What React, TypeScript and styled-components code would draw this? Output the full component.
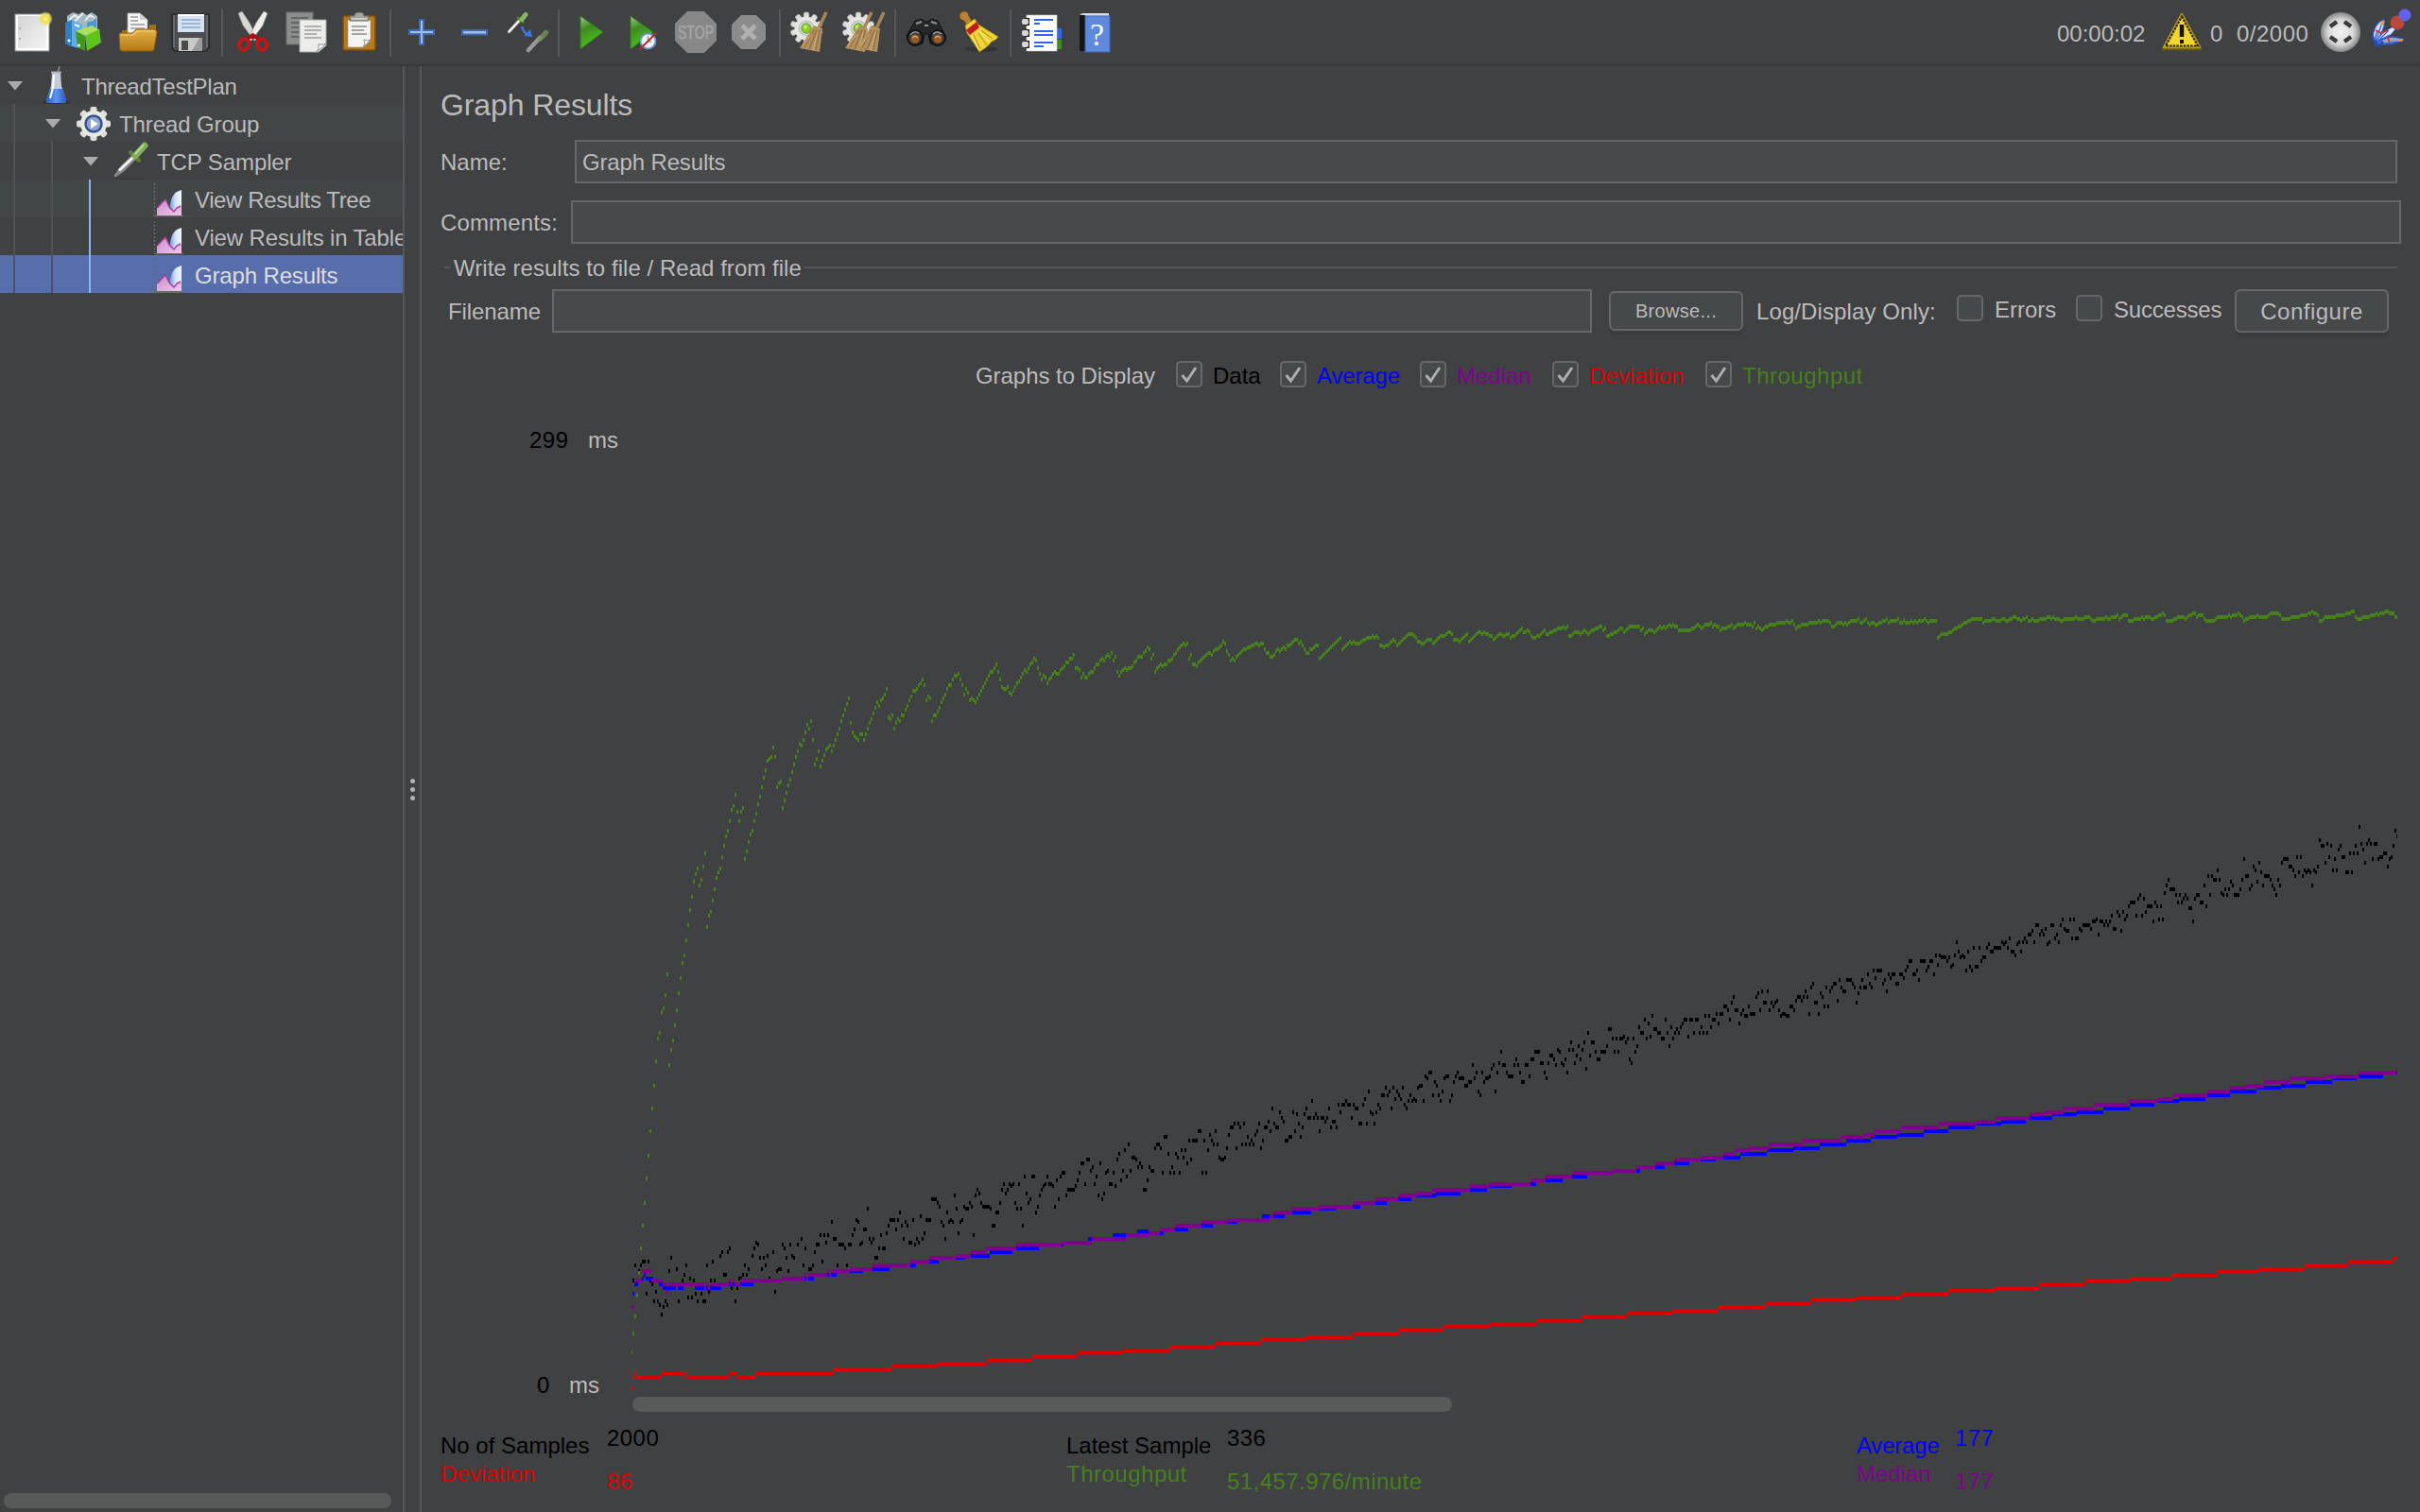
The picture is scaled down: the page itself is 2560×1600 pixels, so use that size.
import React from "react";
import styled, { createGlobalStyle } from "styled-components";

const color = {
  bg: "#404143",
  stripe: "#434647",
  selected: "#586eac",
  text: "#bbbbbb",
  line: "#55585a",
  border: "#656769",
  field: "#48494b",
  button: "#45494a",
  guide: "#505255",
  activeGuide: "#82b7f7",
  black: "#000000",
  blue: "#0000ff",
  purple: "#800090",
  red: "#dc0000",
  green: "#45801b",
  thumb: "#585a59",
};

const GlobalStyle = createGlobalStyle`
  html, body { margin: 0; background: ${color.bg}; }
  body { width: 2560px; height: 1600px; overflow: hidden; }
  * { box-sizing: border-box; }
`;

const Window = styled.div`
  display: flex;
  flex-direction: column;
  width: 2560px;
  height: 1600px;
  background: ${color.bg};
  color: ${color.text};
  font: 24px/28px "Liberation Sans", Arial, sans-serif;
  white-space: nowrap;
`;

const Text = styled.span<{ $color?: string; $width?: number; $drop?: number; $track?: number }>`
  display: block;
  flex: none;
  width: ${(p) => (p.$width ? `${p.$width}px` : "auto")};
  padding-top: ${(p) => p.$drop ?? 0}px;
  color: ${(p) => p.$color ?? "inherit"};
  letter-spacing: ${(p) => p.$track ?? 0}px;
`;

/* ---------- toolbar ---------- */

const Toolbar = styled.div`
  display: flex;
  align-items: center;
  gap: 12px;
  height: 70px;
  flex: none;
  padding: 0 8px 0 12px;
  border-bottom: 2px solid #37383a;
`;

const Separator = styled.div`
  width: 2px;
  height: 50px;
  margin: 2px -2px 0;
  background: ${color.line};
`;

const Status = styled.div`
  display: flex;
  align-items: center;
  margin-left: auto;
`;

const Glyph = styled.svg<{ $left?: number }>`
  display: block;
  flex: none;
  width: 44px;
  height: 44px;
  margin-left: ${(p) => p.$left ?? 0}px;
  overflow: visible;
`;

const Icon = ({ children, left }: { children: React.ReactNode; left?: number }) => (
  <Glyph viewBox="0 0 44 44" $left={left}>
    {children}
  </Glyph>
);

const NewIcon = () => (
  <Icon>
    <defs>
      <radialGradient id="glow">
        <stop offset="0" stopColor="#fffbe0" />
        <stop offset=".35" stopColor="#f3e03a" />
        <stop offset=".7" stopColor="#efe06a" stopOpacity=".75" />
        <stop offset="1" stopColor="#efe06a" stopOpacity="0" />
      </radialGradient>
      <linearGradient id="paper" x1="0" y1="0" x2="1" y2="1">
        <stop offset="0" stopColor="#d4d4d4" />
        <stop offset="1" stopColor="#f4f4f4" />
      </linearGradient>
    </defs>
    <rect x="4" y="3" width="36" height="39" fill="#fff" stroke="#8f918c" strokeWidth="1" />
    <rect x="7" y="5" width="30" height="34" fill="url(#paper)" />
    <circle cx="9" cy="18" r="1" fill="#999" />
    <circle cx="9" cy="29" r="1" fill="#999" />
    <circle cx="36" cy="8" r="8" fill="url(#glow)" />
  </Icon>
);

const TemplatesIcon = () => (
  <Icon>
    <path d="M3 5l6-4 6 2 4-2 5 3 5-3 6 4v22H3z" fill="#a3b6c0" />
    <path d="M5 9l6-5 4 3 5-5M9 12l6-5M22 10l5-6 5 3M25 13l6-4" stroke="#eaf0f2" strokeWidth="1.8" fill="none" />
    <path d="M1 12l7-3v29l-7-4z" fill="#2f7fc4" />
    <path d="M8 9l11 5v26l-11-3z" fill="#62ace6" />
    <path d="M24 12l10-4v12H24z" fill="#4c96d2" />
    <path d="M12 21l17-6 9 5-14 6z" fill="#a8e05c" />
    <path d="M12 21l10 5v16l-8-4z" fill="#3f9a18" />
    <path d="M22 26l15-7 2 14-15 9z" fill="#62c01f" />
    <circle cx="5" cy="31" r="1.500" fill="#fff" />
    <circle cx="15.500" cy="36" r="1.500" fill="#fff" />
    <path d="M11 14l5 2" stroke="#fff" strokeWidth="2" />
  </Icon>
);

const OpenIcon = () => (
  <Icon>
    <defs>
      <linearGradient id="folder" x1="0" y1="0" x2="0" y2="1">
        <stop offset="0" stopColor="#e6b04a" />
        <stop offset="1" stopColor="#b37a14" />
      </linearGradient>
    </defs>
    <path d="M5 20h5v-2h24v-4h7v14H5z" fill="#a36f14" />
    <path d="M11 2h13l8 7v15H11z" fill="#f4f4f4" stroke="#aaa" strokeWidth=".8" />
    <path d="M24 2v7h8z" fill="#cfcfcf" />
    <path d="M14 6h8M14 10h8M14 14h15M14 18h15" stroke="#999" strokeWidth="1.600" />
    <path d="M2 25q0-2 2-2h12l4-4h18q4 0 4 3l-3 18q0 2-3 2H6q-3 0-3-2z" fill="url(#folder)" stroke="#8e5f0c" strokeWidth="1" />
    <path d="M4 25h13l4-4h18" stroke="#f2cf80" strokeWidth="1.200" fill="none" />
  </Icon>
);

const SaveIcon = () => (
  <Icon>
    <path d="M2 3h39v36l-3 3H5l-3-3z" fill="#4b4d50" stroke="#26282a" strokeWidth="1.500" />
    <path d="M4 4v34M39 4v34" stroke="#85878a" strokeWidth="1" />
    <rect x="8" y="3" width="28" height="19" fill="#d5e2f1" />
    <path d="M8 4h28" stroke="#fff" strokeWidth="2" />
    <path d="M12 9h20M12 13h20M12 17h20" stroke="#8aa8cc" strokeWidth="1.600" />
    <rect x="9" y="28" width="25" height="14" fill="#c9c9c9" />
    <rect x="12" y="31" width="7" height="10" fill="#4a4a4a" />
    <path d="M23 42l8-14h3v14z" fill="#9a9a9a" />
  </Icon>
);

const CutIcon = () => (
  <Icon>
    <path d="M6 2l4-2 8 12 9 18-4 1L11 15z" fill="#d7d7d2" stroke="#8b8b86" strokeWidth=".7" />
    <path d="M37 2l-4-2-8 12-9 18 4 1 12-16z" fill="#eeeeea" stroke="#8b8b86" strokeWidth=".7" />
    <path d="M18 27l3.500-3 3.500 3-3.500 3z" fill="#9e1010" />
    <ellipse cx="12" cy="35" rx="5" ry="6" transform="rotate(28 12 35)" fill="none" stroke="#c21718" strokeWidth="4" />
    <ellipse cx="31" cy="35" rx="5" ry="6" transform="rotate(-28 31 35)" fill="none" stroke="#c21718" strokeWidth="4" />
    <path d="M16 29l5.500-4 5.500 4" stroke="#a80f10" strokeWidth="3.500" fill="none" />
  </Icon>
);

const CopyIcon = () => (
  <Icon>
    <rect x="1" y="1" width="28" height="34" fill="#8b8d8c" stroke="#6d6f6e" />
    <path d="M6 7h18M6 12h9M6 17h9M6 22h9M6 27h9" stroke="#646665" strokeWidth="2" />
    <path d="M15 9h28v27l-8 7H15z" fill="#ececeb" stroke="#a5a6a4" />
    <path d="M20 16h18M20 20h18M20 24h13M20 28h18" stroke="#b1b1b0" strokeWidth="1.800" />
    <path d="M33 43q3-3 2-8 5 1 8-1z" fill="#fff" stroke="#8f908f" strokeWidth="1" />
  </Icon>
);

const PasteIcon = () => (
  <Icon>
    <rect x="5" y="5" width="34" height="36" rx="1.500" fill="#b5781c" stroke="#7e4f0a" strokeWidth="1.500" />
    <path d="M10 9h24v22l-7 7H10z" fill="#f3f3f2" stroke="#999" strokeWidth=".6" />
    <path d="M14 16h16M14 20h13M14 24h16" stroke="#8c8d8b" strokeWidth="1.600" />
    <path d="M26 38q3-3 1-8 4 2 7 0z" fill="#fff" stroke="#777" strokeWidth=".8" />
    <path d="M12 5h5q0-4 5-4t5 4h5v5H12z" fill="#a4a69c" stroke="#6b6c66" strokeWidth="1" />
    <path d="M14 8h16" stroke="#d8d9d2" strokeWidth="1.500" />
  </Icon>
);

const PlusIcon = () => (
  <Icon>
    <path d="M20 9h4v11h11v4H24v11h-4V24H9v-4h11z" fill="#9fc0ea" stroke="#4168b0" strokeWidth="2" />
  </Icon>
);

const MinusIcon = () => (
  <Icon>
    <rect x="9" y="20" width="26" height="4.500" fill="#9fc0ea" stroke="#4168b0" strokeWidth="2" />
  </Icon>
);

const ToggleIcon = () => (
  <Icon>
    <path d="M2.500 21.500L14 9" stroke="#777" strokeWidth="4" strokeLinecap="round" />
    <path d="M2.500 21.500L14 9" stroke="#fff" strokeWidth="2.200" strokeLinecap="round" />
    <path d="M12 7l5 4" stroke="#557f38" strokeWidth="3" strokeLinecap="round" />
    <path d="M16 8.500L20 3.500" stroke="#86b862" strokeWidth="5" strokeLinecap="round" />
    <path d="M16 16q2 8 9 9.500" stroke="#3f78dd" strokeWidth="2.400" fill="none" />
    <path d="M27 27l-9-1 7-7z" fill="#3f78dd" />
    <path d="M23 41l12-13" stroke="#b4b6b2" strokeWidth="4.500" strokeLinecap="round" opacity=".75" />
    <path d="M35.500 29l6-6.500" stroke="#76945a" strokeWidth="5.500" strokeLinecap="round" opacity=".8" />
  </Icon>
);

const PlayShape = ({ dx = 0 }: { dx?: number }) => (
  <>
    <defs>
      <linearGradient id="play" x1="0" y1="0" x2=".3" y2="1">
        <stop offset="0" stopColor="#a5cf94" />
        <stop offset=".4" stopColor="#3f8a22" />
        <stop offset="1" stopColor="#49c41c" />
      </linearGradient>
    </defs>
    <path d={`M${12 + dx} 5v35l24-18z`} fill="url(#play)" stroke="#2f7a14" strokeWidth="1" />
  </>
);

const PlayIcon = () => (
  <Icon>
    <PlayShape />
  </Icon>
);

const PlayNoPauseIcon = () => (
  <Icon>
    <PlayShape dx={-3} />
    <circle cx="27.500" cy="31.500" r="8" fill="#f2f4f8" stroke="#6c93c8" strokeWidth="2" />
    <path d="M27.500 26v6h4" stroke="#7a8493" strokeWidth="1.200" fill="none" />
    <path d="M19 40l17-17" stroke="#c22a2a" strokeWidth="2.200" />
  </Icon>
);

const StopWord = styled.text`
  font: 21px "Liberation Sans", Arial, sans-serif;
  fill: #a6a6a6;
  stroke: #a6a6a6;
  stroke-width: 0.6px;
`;

const StopIcon = () => (
  <Icon>
    <path d="M13 0h18l13 13v18L31 44H13L0 31V13z" fill="#878787" />
    <StopWord x="3" y="29" textLength="38" lengthAdjust="spacingAndGlyphs">STOP</StopWord>
  </Icon>
);

const ShutdownIcon = () => (
  <Icon>
    <path d="M14 4h16l10 10v16L30 40H14L4 30V14z" fill="#8b8b8b" />
    <path d="M15 15l14 14M29 15L15 29" stroke="#b0b0b0" strokeWidth="5" />
  </Icon>
);

const GearShape = ({ cx = 17 }: { cx?: number }) => (
  <>
    <g transform={`translate(${cx} 18)`} fill="#dfdfdd" stroke="#a9a9a7" strokeWidth=".8">
      {[0, 36, 72, 108, 144, 180, 216, 252, 288, 324].map((angle) => (
        <rect key={angle} x="-2.800" y="-17" width="5.600" height="8" rx="2" transform={`rotate(${angle})`} />
      ))}
    </g>
    <circle cx={cx} cy="18" r="12.500" fill="#e6e6e4" />
    <circle cx={cx} cy="18" r="7.500" fill="none" stroke="#c4c6c2" strokeWidth="2" />
    <circle cx={cx} cy="18" r="5.200" fill="#8ecb2a" stroke="#67992a" />
    <circle cx={cx - 1} cy="16.500" r="2" fill="#c5ea83" />
  </>
);

const Broom = ({ dx = 0 }: { dx?: number }) => (
  <g transform={`translate(${dx} 0)`}>
    <path d="M38 1l-8 17" stroke="#a58457" strokeWidth="3.500" />
    <path d="M25 15l9 3-3 25-21-4z" fill="#b2905f" />
    <path d="M25 20L15 38M28 20l-8 20M31 20l-4 21" stroke="#8a6b42" strokeWidth="1.200" />
    <path d="M23 24L13 37M29 22l-5 19" stroke="#d2b07c" strokeWidth="1" />
  </g>
);

const ClearIcon = () => (
  <Icon>
    <GearShape />
    <Broom />
  </Icon>
);

const ClearAllIcon = () => (
  <Icon>
    <GearShape cx={16} />
    <Broom dx={-8} />
    <Broom dx={5} />
  </Icon>
);

const SearchIcon = () => (
  <Icon>
    <path d="M10 10l7-2 3 3h4l3-3 7 2 8 16-5 8H26l-2-10h-4l-2 10H7l-6-8z" fill="#26282a" stroke="#0f1011" />
    <path d="M11 13l6-2M33 13l-6-2M20 15h4" stroke="#8f9193" strokeWidth="2" />
    <circle cx="10" cy="28" r="8" fill="#3a3c3e" stroke="#101112" strokeWidth="2" />
    <circle cx="34" cy="28" r="8" fill="#3a3c3e" stroke="#101112" strokeWidth="2" />
    <circle cx="10" cy="29" r="4.500" fill="#9a5b22" />
    <circle cx="34" cy="29" r="4.500" fill="#9a5b22" />
    <path d="M7 28q3-3 6 0M31 28q3-3 6 0" stroke="#e0a566" strokeWidth="1.500" fill="none" />
    <path d="M5 25q4-5 9-2M29 24q4-4 9 0" stroke="#9b9da0" strokeWidth="1.200" fill="none" />
  </Icon>
);

const BroomIcon = () => (
  <Icon>
    <ellipse cx="24" cy="40" rx="17" ry="3" fill="#333436" />
    <path d="M1 4q1-4 5-4t5 5l3 6-5 4-3-5Q1 9 1 4z" fill="#b98236" stroke="#7a4f14" />
    <path d="M7 15l10-7 4 6 21 13q-3 4-7 5-4 6-13 11Q16 33 9 23z" fill="#efd43a" stroke="#a98a10" />
    <path d="M16 25l7 15M21 23l9 13M24 20l12 9" stroke="#bd9c17" strokeWidth="1.200" />
    <path d="M14 26l7 14M22 21l11 12" stroke="#fff3a0" strokeWidth="1" />
    <path d="M8 20l11-9 3 6-10 8z" fill="#c21b1b" />
  </Icon>
);

const FunctionIcon = () => (
  <Icon>
    <rect x="36" y="18" width="7" height="11" fill="#2d6be0" />
    <rect x="36" y="30" width="7" height="10" fill="#3f8f1c" />
    <rect x="6" y="4" width="32" height="38" fill="#fdfdfd" stroke="#ccc" strokeWidth=".6" />
    <path d="M14 9h20M14 21h20M14 33h20" stroke="#3264e6" strokeWidth="2" />
    <path d="M14 13h6M14 25h20M14 37h10" stroke="#3264e6" strokeWidth="2" />
    {[11, 23, 35].map((y) => (
      <g key={y}>
        <rect x="4" y={y - 4} width="5" height="8" fill="#1d1d1d" />
        <rect x="1" y={y - 3} width="7" height="6" rx="2" fill="#d6d6d6" />
      </g>
    ))}
  </Icon>
);

const HelpMark = styled.text`
  font: 34px "Liberation Serif", "Times New Roman", serif;
  fill: #f2f6ff;
`;

const HelpIcon = () => (
  <Icon>
    <path d="M6 4l3-2h28v3H8z" fill="#dcdcdc" />
    <rect x="6" y="4" width="6" height="38" fill="#141517" />
    <rect x="12" y="5" width="26" height="38" fill="#5f8adb" stroke="#3c68bb" strokeWidth="1" />
    <HelpMark x="17" y="36">?</HelpMark>
  </Icon>
);

const WarningIcon = () => (
  <Icon>
    <path d="M22 3L42 40H2z" fill="#6b5a17" stroke="#6b5a17" strokeWidth="2.500" strokeLinejoin="round" />
    <path d="M22 3L41 38H3z" fill="#f1d531" stroke="#b39a20" strokeWidth="2.500" strokeLinejoin="round" />
    <path d="M22 5.500L39 36.500H5z" fill="#f1d531" stroke="#2b2710" strokeWidth="2.200" strokeDasharray="2.500 1.200" />
    <path d="M22 14v13" stroke="#17150a" strokeWidth="4.500" />
    <rect x="20" y="30" width="4" height="4" fill="#17150a" />
  </Icon>
);

const RemoteIcon = () => (
  <Icon>
    <defs>
      <radialGradient id="ball">
        <stop offset="0" stopColor="#f4f4f4" />
        <stop offset=".65" stopColor="#d6d6d6" />
        <stop offset="1" stopColor="#858585" />
      </radialGradient>
    </defs>
    <circle cx="22" cy="22" r="21" fill="url(#ball)" />
    <path d="M11 16l7-5M33 16l-7-5M11 27l7 5M33 27l-7 5" stroke="#3a3a3a" strokeWidth="4.500" />
  </Icon>
);

const FeatherIcon = () => (
  <Icon left={10}>
    <path d="M4 33C-1 24 6 10 14 9c2 6-4 17-9 24z" fill="#d3dff7" stroke="#2c55c8" strokeWidth="1.400" />
    <path d="M5 34Q10 22 24 16l2 3q-7 10-20 15z" fill="#dfe8f7" stroke="#2c55c8" strokeWidth="1" />
    <path d="M5 35q14-13 30-5-11 6-30 5z" fill="#9aa3bd" stroke="#2c55c8" strokeWidth="1.400" />
    <path d="M4 34L12 12M5 34l14-14M5 35l24-3M3 32q2-6 4-12M8 31l12-6" stroke="#2d5be0" strokeWidth="1.100" fill="none" />
    <path d="M1 26l6 11 6-5" stroke="#2349b8" strokeWidth="2.500" fill="none" />
    <path d="M5 20l6 3 7-3M17 26l3 7" stroke="#c8342e" strokeWidth="1.800" fill="none" />
    <path d="M11 14l3-4M29 31l5-1" stroke="#e89a2c" strokeWidth="2.800" />
    <circle cx="28" cy="12" r="7.500" fill="#b8493c" />
    <circle cx="36" cy="4" r="6.500" fill="#6462ee" />
  </Icon>
);

const toolbarGroups: React.FC[][] = [
  [NewIcon, TemplatesIcon, OpenIcon, SaveIcon],
  [CutIcon, CopyIcon, PasteIcon],
  [PlusIcon, MinusIcon, ToggleIcon],
  [PlayIcon, PlayNoPauseIcon, StopIcon, ShutdownIcon],
  [ClearIcon, ClearAllIcon],
  [SearchIcon, BroomIcon],
  [FunctionIcon, HelpIcon],
];

/* ---------- tree ---------- */

const Body = styled.div`
  display: flex;
  flex: 1;
  min-height: 0;
`;

const TreePane = styled.div`
  display: flex;
  flex-direction: column;
  width: 426px;
  flex: none;
  overflow: hidden;
`;

const TreeRow = styled.div<{ $striped?: boolean; $selected?: boolean }>`
  display: flex;
  align-items: center;
  height: 40px;
  flex: none;
  overflow: hidden;
  background: ${(p) => (p.$selected ? color.selected : p.$striped ? color.stripe : "transparent")};
  color: ${(p) => (p.$selected ? "#dddddd" : color.text)};
`;

const Indent = styled.div<{ $active: boolean }>`
  flex: none;
  width: 26px;
  height: 40px;
  margin-left: 14px;
  border-left: 2px solid ${(p) => (p.$active ? color.activeGuide : color.guide)};
`;

const Expander = styled.div<{ $open: boolean }>`
  flex: none;
  width: 38px;
  padding-left: 7.5px;
  &::before {
    content: "";
    display: ${(p) => (p.$open ? "block" : "none")};
    width: 17px;
    height: 10px;
    margin-top: 1px;
    background: #a9abad;
    clip-path: polygon(0 0, 100% 0, 50% 100%);
  }
`;

const NodeLabel = styled(Text)`
  margin-left: 4px;
`;

const TreeThumb = styled.div`
  width: 410px;
  height: 16px;
  margin: auto 0 4px 4px;
  border-radius: 8px;
  background: ${color.thumb};
`;

const FlaskIcon = () => (
  <Icon>
    <defs>
      <linearGradient id="liquid" x1="0" y1="0" x2="1" y2="0">
        <stop offset="0" stopColor="#2559c4" />
        <stop offset=".5" stopColor="#5d94f0" />
        <stop offset="1" stopColor="#2559c4" />
      </linearGradient>
    </defs>
    <ellipse cx="21" cy="40" rx="14" ry="2.500" fill="#2f3032" />
    <path d="M23 9l2-7" stroke="#8a8a8a" strokeWidth="1.500" />
    <path d="M17 9h9l1 14 5 15q0 3-3 3H14q-4 0-3-3l5-15z" fill="#c3cbdc" />
    <path d="M15 26h13l4 12q0 3-3 3H14q-4 0-3-3z" fill="url(#liquid)" />
    <path d="M19 11l-1 14-3 11" stroke="#fff" strokeWidth="2" fill="none" />
    <path d="M16 8.500h11" stroke="#a7adba" strokeWidth="2" />
  </Icon>
);

const ThreadGroupIcon = () => (
  <Icon>
    <g transform="translate(21 23)" fill="#dededa">
      {[0, 45, 90, 135, 180, 225, 270, 315].map((angle) => (
        <rect key={angle} x="-3.500" y="-18" width="7" height="8" rx="2" transform={`rotate(${angle})`} />
      ))}
    </g>
    <circle cx="21" cy="23" r="14" fill="#e8e8e5" />
    <circle cx="21" cy="23" r="8.500" fill="#8ea3cf" stroke="#35528f" strokeWidth="2.500" />
    <path d="M18 18v10l8-5z" fill="#fff" />
  </Icon>
);

const SamplerIcon = () => (
  <Icon>
    <path d="M4 42h30" stroke="#343537" strokeWidth="2.500" />
    <path d="M2 38l6-9 15-15 5 5-15 15-9 6z" fill="#858785" stroke="#3a3b3b" strokeWidth=".8" />
    <path d="M8 32.500l17-16" stroke="#f5f5f5" strokeWidth="2.800" />
    <path d="M20 13l9 9" stroke="#587f3d" strokeWidth="4" strokeLinecap="round" />
    <path d="M25 17l10-11" stroke="#7fae5c" strokeWidth="7" strokeLinecap="round" />
    <path d="M25.500 14.500l8-9" stroke="#b5d69a" strokeWidth="2" strokeLinecap="round" />
  </Icon>
);

const ListenerIcon = () => (
  <Icon>
    <defs>
      <linearGradient id="sky" x1="0" y1="0" x2="1" y2="0">
        <stop offset="0" stopColor="#5f8fe0" />
        <stop offset=".5" stopColor="#d3e2fb" />
        <stop offset="1" stopColor="#f4f8ff" />
      </linearGradient>
      <linearGradient id="pink" x1="0" y1="0" x2="1" y2="1">
        <stop offset="0" stopColor="#c78fd0" />
        <stop offset="1" stopColor="#f3c6ec" />
      </linearGradient>
    </defs>
    <path d="M5.500 6v33" stroke="#66686a" strokeWidth="1.500" strokeDasharray="2 2" />
    <path d="M5 40.500h31" stroke="#66686a" strokeWidth="1.500" />
    <path d="M21 37q1-18 8-22l5-2v27H21z" fill="url(#sky)" />
    <path d="M8 40v-8l4-4 5-5 4 8 5 5 3-4 5-2v10z" fill="url(#pink)" />
    <path d="M8.500 32l3.500-4 5-5 4 8 5 5 3-4 4-2" stroke="#a53f8c" strokeWidth="1.400" fill="none" />
  </Icon>
);

const treeNodes = [
  { label: "ThreadTestPlan", depth: 0, open: true, icon: FlaskIcon, track: -0.25 },
  { label: "Thread Group", depth: 1, open: true, icon: ThreadGroupIcon, track: -0.1 },
  { label: "TCP Sampler", depth: 2, open: true, icon: SamplerIcon, track: -0.1 },
  { label: "View Results Tree", depth: 3, icon: ListenerIcon, track: -0.4 },
  { label: "View Results in Table", depth: 3, icon: ListenerIcon, track: -0.15 },
  { label: "Graph Results", depth: 3, icon: ListenerIcon, selected: true, track: -0.15 },
];

const Splitter = styled.div`
  display: flex;
  flex-direction: column;
  align-items: center;
  justify-content: center;
  gap: 4px;
  width: 20px;
  flex: none;
  border: solid ${color.line};
  border-width: 0 2px;
`;

const Grip = styled.div`
  width: 5px;
  height: 5px;
  border-radius: 50%;
  background: #b0b2b4;
`;

/* ---------- form ---------- */

const Panel = styled.div`
  display: flex;
  flex-direction: column;
  flex: 1;
  min-width: 0;
  padding: 21px 20px 0;
`;

const Title = styled.div`
  height: 40px;
  font-size: 32px;
  line-height: 40px;
  letter-spacing: -0.1px;
`;

const FormRow = styled.div<{ $top: number; $left?: number; $right?: number }>`
  display: flex;
  align-items: center;
  flex: none;
  height: 46px;
  margin: ${(p) => p.$top}px ${(p) => p.$right ?? 0}px 0 ${(p) => p.$left ?? 0}px;
`;

const Field = styled.div<{ $width?: number }>`
  flex: ${(p) => (p.$width ? "none" : "1")};
  width: ${(p) => (p.$width ? `${p.$width}px` : "auto")};
  height: 46px;
  padding: 8px 0 0 6px;
  border: 2px solid ${color.border};
  background: ${color.field};
  letter-spacing: -0.15px;
`;

const GroupTitle = styled.div`
  display: flex;
  align-items: center;
  height: 28px;
  flex: none;
  margin: 12px 4px 0 4px;
`;

const Rule = styled.div<{ $width?: number }>`
  flex: ${(p) => (p.$width ? "none" : "1")};
  width: ${(p) => (p.$width ? `${p.$width}px` : "auto")};
  height: 2px;
  margin: 0 4px 2px 4px;
  background: ${color.line};
  &:first-child { margin-left: 0; }
  &:last-child { margin: 0 0 2px 3px; }
`;

const Button = styled.div<{ $width: number; $small?: boolean }>`
  flex: none;
  width: ${(p) => p.$width}px;
  height: ${(p) => (p.$small ? 42 : 46)}px;
  padding-top: ${(p) => (p.$small ? 5 : 8)}px;
  border: 2px solid ${color.border};
  border-radius: 6px;
  background: ${color.button};
  box-shadow: 0 4px 0 #3a3b3d;
  font-size: ${(p) => (p.$small ? 20 : 24)}px;
  letter-spacing: ${(p) => (p.$small ? 0.3 : 0.5)}px;
  text-align: center;
`;

const CheckItem = styled.div<{ $width: number; $lift?: boolean }>`
  display: flex;
  align-items: center;
  gap: ${(p) => (p.$lift ? 12 : 11)}px;
  flex: none;
  width: ${(p) => p.$width}px;
  height: 28px;
  margin-bottom: ${(p) => (p.$lift ? 6 : 0)}px;
`;

const Box = styled.svg`
  flex: none;
  width: 28px;
  height: 28px;
`;

type CheckboxProps = { label: string; width: number; checked?: boolean; tint?: string; lift?: boolean; track?: number };

const Checkbox = ({ label, width, checked, tint, lift, track }: CheckboxProps) => (
  <CheckItem $width={width} $lift={lift}>
    <Box viewBox="0 0 28 28">
      <rect x="1" y="1" width="26" height="26" rx="3.500" fill={color.button} stroke={color.border} strokeWidth="2" />
      {checked && <path d="M6.500 15l5 6L21 7" fill="none" stroke="#abadaf" strokeWidth="3" />}
    </Box>
    <Text $drop={4} $color={tint} $track={track}>{label}</Text>
  </CheckItem>
);

const Space = styled.div<{ $size: number }>`
  flex: none;
  width: ${(p) => p.$size}px;
`;

const GraphChoices = styled.div`
  display: flex;
  align-items: center;
  flex: none;
  height: 28px;
  margin: 30px 0 0 566px;
`;

/* ---------- chart ---------- */

const ChartArea = styled.div`
  display: flex;
  flex: none;
  height: 1074px;
  margin-top: 10px;
`;

const Axis = styled.div`
  display: flex;
  flex-direction: column;
  justify-content: space-between;
  width: 202px;
  padding: 32px 0 14px;
`;

const AxisMark = styled.div<{ $left: number }>`
  display: flex;
  padding-left: ${(p) => p.$left}px;
`;

const PlotColumn = styled.div`
  display: flex;
  flex-direction: column;
`;

const Plot = styled.svg`
  display: block;
  width: 1868px;
  height: 1058px;
  overflow: hidden;
`;

const PlotThumb = styled.div`
  width: 867px;
  height: 16px;
  margin-left: 1px;
  border-radius: 8px;
  background: ${color.thumb};
`;

/* Each strip of the recording keeps its own origin and units per pixel. */
type Strip = {
  x: number;
  scale: number;
  end: number;
  throughput: string;
  data: string;
  median: string;
  average: string;
};

const strips: Strip[] = [
  {
    x: 640,
    scale: 1568 / 860,
    end: 1468,
    throughput:
      "84,1442 90,1405 96,1373 102,1332 108,1289 114,1241 120,1198 126,1154 132,1106 138,1063 144,1015 150,971 156,928 162,880 168,837 174,826 180,785 186,778 192,753 198,713 204,888 210,858 216,840 222,811 228,782 234,749 240,720 246,691 252,676 258,647 264,618 270,589 276,563 282,534 288,520 294,509 300,541 306,530 312,505 318,479 324,621 330,599 336,592 342,570 348,548 354,527 360,516 366,509 372,487 378,465 384,447 390,435 396,417 402,395 408,388 414,366 420,399 426,417 432,399 438,392 444,490 450,476 456,457 462,443 468,435 474,417 480,403 486,384 492,370 498,352 504,333 510,319 516,300 522,297 528,293 534,275 540,293 546,352 552,344 558,341 564,392 570,377 576,362 582,348 588,337 594,322 600,308 606,293 612,282 618,268 624,271 630,260 636,246 642,231 648,238 654,224 660,260 666,308 672,297 678,282 684,311 690,300 696,290 702,279 708,275 714,271 720,282 726,271 744,238 750,224 774,180 780,228 786,246 792,253 804,260 810,250 816,250 822,260 840,228 846,220 864,187 870,195 876,184 882,180 888,173 894,162 900,217 906,220 912,213 918,238 924,228 930,220 936,224 942,213 948,213 978,166 984,166 1002,151 1008,144 1014,155 1020,184 1026,177 1032,180 1038,224 1044,213 1050,213 1056,206 1092,155 1098,155 1110,136 1116,136 1122,133 1134,155 1140,173 1146,162 1152,169 1158,184 1164,180 1176,187 1224,129 1230,129 1242,115 1254,144 1260,158 1266,162 1272,162 1278,158 1284,169 1290,173 1332,126 1338,129 1362,104 1368,107 1374,122 1386,144 1392,136 1398,140 1404,151 1428,129 1434,133 1440,133 1446,126 1470,108",
    data:
      "90,1303 96,1274 108,1285 114,1274 120,1267,2 138,1267 132,1329 144,1303 150,1311 156,1343 162,1325 168,1343 174,1350 180,1369 186,1354 192,1343 198,1350 204,1285 210,1260 228,1281 234,1343 246,1303 252,1292 258,1274 264,1336 270,1300 276,1336 282,1303 288,1329 294,1343 306,1329 312,1343,2 324,1274 330,1325 336,1303 342,1267 348,1303 366,1256 372,1249 378,1292,2 390,1249 396,1241 402,1318 414,1343 420,1318 426,1300,2 438,1292 444,1274 450,1292 456,1281 468,1256 474,1241 480,1230 486,1234 492,1260 498,1281 504,1260 510,1274 516,1256 522,1300 534,1249 540,1325 546,1285 552,1281,2 564,1234 570,1241 576,1260 582,1285 588,1234 594,1256 600,1260 612,1234 624,1223 630,1274 636,1241 648,1281,2 660,1274 666,1249 672,1234,2 684,1216 690,1267 696,1216 702,1230 708,1216 720,1190 726,1223,2 738,1274 744,1234,3 762,1241 768,1274 774,1234,2 786,1216 792,1205 798,1187 804,1190 810,1234 816,1230 822,1205,2 834,1164 840,1223 846,1230 852,1223 858,1260,2 870,1241 876,1216 882,1241,2 894,1212 900,1198 906,1187,3 924,1205 930,1187 936,1172 942,1198 948,1223 954,1190 960,1198 966,1230,2 978,1187 984,1234 990,1223 996,1230 1002,1179 1008,1223 1014,1212 1020,1187,3 1038,1146,3 1056,1153 1062,1161 1068,1190 1074,1198 1080,1223 1086,1172 1092,1190 1098,1187 1104,1190 1110,1139 1116,1164 1122,1212 1128,1190 1134,1187 1140,1161 1146,1164,2 1158,1153 1164,1161 1170,1216 1176,1139 1182,1128 1188,1135 1194,1153 1200,1161,4 1224,1164 1230,1198,2 1242,1172,2 1254,1153 1260,1128 1266,1117 1272,1135 1278,1128 1284,1117 1290,1120 1296,1117 1302,1153 1308,1164 1314,1117 1320,1164 1326,1198 1332,1102 1338,1135 1344,1153 1350,1146 1356,1102,2 1368,1172 1374,1161 1380,1139 1386,1128 1392,1120 1398,1117 1404,1102 1410,1117,2 1422,1120 1428,1161 1434,1110 1440,1146 1446,1102 1452,1095,2 1464,1139",
    median:
      "84-93,1354 93-117,1303 117-147,1285 147-183,1303 183-195,1311 195-201,1325 201-315,1311 315-321,1318 321-327,1311 327-333,1318 333-393,1311 393-399,1303 399-405,1311 405-411,1303 411-429,1311 429-561,1303 561-633,1300 633-639,1292 639-645,1300 645-705,1292 705-711,1285 711-717,1292 717-777,1285 777-849,1281 849-969,1274 969-1029,1267 1029-1113,1260 1113-1161,1256 1161-1209,1249 1209-1305,1241 1305-1449,1234 1449-1470,1230",
    average:
      "87-93,1329 93-105,1311 117-123,1300 123-129,1292 129-153,1300 171-183,1311 183-225,1318 231-249,1318 285-315,1318 321-327,1318 333-369,1318 393-399,1311 405-411,1311 429-471,1311 633-639,1300 645-663,1300 705-711,1292 717-735,1292 777-819,1285 849-903,1281 969-987,1274 1029-1059,1267 1113-1143,1260 1161-1221,1256 1221-1293,1249 1305-1377,1241 1449-1455,1234",
  },
  {
    x: 1130,
    scale: 1568 / 720,
    end: 1408,
    throughput:
      "0,132 6,124 12,124 18,115 24,146 30,146 36,150 42,167 48,159 54,167 60,167 66,159 78,154 90,137 96,137 108,124 114,128 120,119 126,115 132,119 138,110 144,128 150,119 156,154 162,163 174,150 180,146 186,150 204,141 222,119 234,119 252,98 258,102 264,124 270,115 276,154 282,146 294,137 300,141 312,137 318,128 324,128 354,98 366,89 372,93 378,89 384,124 390,115 396,137 402,137 408,141 414,132 438,115 450,110 456,115 462,106 480,98 492,85 498,89 504,106 510,115 516,128 522,124 528,128 534,119 552,106 576,98 600,89 606,93 612,89 618,89 624,102 630,110 636,110 642,119 648,119 666,102 672,106 684,98 690,102 696,93 702,93 720,80 726,80 732,89 738,85 744,93 750,102 756,110 762,110 768,102 774,102 786,93 792,93 798,124 864,76 870,102 888,89 894,85 900,89 906,85 912,89 924,89 948,76 960,76 966,72 972,76 978,72 984,76 990,93 996,93 1002,98 1020,89 1032,80 1038,85 1044,93 1062,80 1080,67 1086,67 1098,72 1104,76 1110,85 1116,85 1122,89 1128,89 1140,80 1152,80 1158,89 1182,72 1194,72 1206,63 1218,67 1224,80 1236,80 1242,85 1266,67 1272,85 1296,67 1308,63 1314,67 1320,63 1326,67 1344,72 1350,80 1362,72 1374,67 1380,72 1398,67 1404,76",
    data:
      "0,1348,4 24,1339 30,1326 36,1308 42,1287,2 54,1335 60,1278,2 72,1304 78,1295 84,1335 90,1317 96,1361 102,1287 108,1369 114,1356 120,1308 126,1304 132,1335,2 144,1308 150,1339 156,1278 162,1265 168,1326 174,1304 180,1256 186,1317 192,1243 198,1304 204,1274,2 216,1278 222,1295 228,1287 234,1295 240,1348,2 252,1326 258,1295 264,1304,2 276,1252 282,1243,2 294,1252 300,1308 306,1226,2 318,1265 324,1308 330,1295 336,1308 342,1265 348,1274 354,1308 360,1256 366,1274 372,1256 378,1287 384,1234 390,1278 396,1234,3 414,1213,2 426,1308 432,1234 438,1308 444,1256 450,1221 456,1234 462,1243 468,1213 474,1243 480,1274 486,1278,2 498,1274 504,1252 510,1221 516,1204,2 528,1195 534,1252 540,1195 546,1204 552,1243 558,1195 564,1243 570,1226 576,1243 582,1234 588,1243 594,1221 600,1213 606,1195 612,1252 618,1234 624,1204,2 636,1191 642,1213 648,1160 654,1195 660,1204,2 672,1169 678,1182 684,1191 690,1234,2 702,1226,2 714,1169 720,1213 726,1173 732,1195 738,1226 744,1204 750,1173 756,1160 762,1182,2 774,1143 780,1182 786,1173 792,1182 798,1213 804,1182,2 816,1191 822,1182 828,1160 834,1204 840,1191,2 852,1204 858,1152 864,1169 870,1152,2 882,1143 888,1152,2 900,1182 906,1152 912,1160,2 924,1195,2 936,1152 942,1139 948,1195 954,1121 960,1169 966,1173 972,1195 978,1169 984,1152 990,1160 996,1130,2 1008,1112 1014,1130 1020,1121 1026,1160 1032,1112 1038,1139 1044,1121 1050,1130 1056,1139 1062,1112 1068,1152 1074,1160 1080,1143 1086,1130 1092,1143 1098,1139 1104,1143 1110,1112 1116,1108,2 1128,1143 1134,1086 1140,1091 1146,1078,2 1158,1130 1164,1100 1170,1108 1176,1130 1182,1143 1188,1121 1194,1091 1200,1086,2 1212,1143 1218,1130 1224,1100 1230,1086 1236,1078 1242,1091,3 1260,1108,2 1272,1100,2 1284,1060 1290,1091 1296,1078 1302,1121 1308,1130 1314,1078 1320,1100 1326,1091,2 1338,1086 1344,1069 1350,1060 1356,1121 1362,1078 1368,1056 1374,1030 1380,1060,2 1392,1078 1398,1086,2",
    median:
      "0-75,1469 75-183,1461 183-255,1452 255-291,1448 291-339,1439 339-423,1430 423-507,1422 507-639,1417 639-651,1409 651-711,1400 711-795,1391 795-903,1387 903-975,1378 975-1047,1369 1047-1107,1361 1107-1155,1356 1155-1275,1348 1275-1335,1339 1335-1410,1335",
    average:
      "63-75,1461 141-183,1452 219-255,1446 291-303,1448 339-381,1439 423-459,1430 507-537,1422 615-639,1409 651-687,1409 711-771,1400 795-849,1391 903-927,1387 975-1011,1378 1047-1089,1369 1107-1167,1361 1167-1245,1356 1275-1329,1348 1335-1407,1339",
  },
  {
    x: 1600,
    scale: 1568 / 720,
    end: 1408,
    throughput:
      "0,72 6,72 12,67 30,54 36,63 42,63 48,59 54,63 60,72 66,76 72,76 78,72 84,72 102,59 108,67 114,67 120,63 126,63 132,59 138,59 144,54 156,54 162,50 168,54 174,50 180,72 204,63 210,63 216,67 228,59 240,67 246,63 264,54 282,50 288,59 294,54 300,72 318,67 330,63 342,54 348,54 354,63 360,59 372,50 402,50 408,59 414,54 420,67 432,59 444,59 450,63 468,50 474,54 480,50 486,54 498,46 504,50 510,46 516,50 522,50 528,59 564,59 570,54 576,54 588,46 600,54 612,46 624,46 630,41 636,50 642,46 648,50 654,50 660,59 666,54 678,54 696,46 702,54 714,46 732,46 738,41 744,46 756,46 762,50 768,41 774,54 780,50 792,59 798,54 816,46 834,46 840,41 864,41 870,37 876,41 882,41 888,37 894,46 900,54 906,50 918,46 936,46 942,41 966,41 972,37 978,41 990,37 1002,37 1008,41 1014,50 1026,46 1038,41 1044,41 1050,46 1056,41 1062,46 1074,37 1092,37 1098,33 1104,41 1110,41 1122,33 1128,41 1134,46 1140,41 1152,46 1158,46 1176,37 1182,37 1188,33 1194,41 1200,37 1218,37 1224,33 1230,41 1236,41 1242,37 1248,41 1260,41 1266,37 1272,41 1278,37 1284,41 1290,37 1302,37 1308,33 1314,37 1320,41 1326,37 1344,37 1350,76 1356,72 1368,67 1380,67 1386,63 1392,63 1410,50",
    data:
      "0,1086 6,1060 12,1048 18,1060 24,1078 30,1100,2 42,1060,2 54,1086 60,1048,2 72,1030,3 90,1056,2 102,1078 108,1091 114,1056 120,1038,2 132,1048 138,1060 144,1025 150,1030 156,1056 162,1060 168,1048 174,1078 180,1025 186,1008 192,1025 198,1056 204,1038 210,1017 216,1048 222,1025 228,1008 234,1069 240,986 246,1038 252,1008,2 264,1030 270,1048,2 282,1030,3 300,1017 306,977,2 318,999 324,1030 330,999 336,1030 342,999,2 354,995 360,1008 366,999 372,1048 378,1056 384,999 390,1030 396,1017 402,973 408,986,2 420,956 426,999 432,964 438,995 444,947 450,977,2 462,986,2 474,999,2 486,956 492,986 498,1017 504,973 510,999 516,986 522,977 528,986 534,973 540,964 546,956,2 558,995 564,956,2 576,986 582,956,2 594,986 600,973 606,986 612,947 618,986 624,947 630,973 636,956,2 648,943 654,964 660,943,2 672,925,2 684,934 690,956 696,916 702,903 708,934,2 720,964 726,943 732,934 738,947,2 750,925 756,943,3 774,903 780,895 786,934 792,890 798,916,2 810,890 816,934 822,916 828,925 834,916 840,912 846,934 852,947 858,943,2 870,947,2 882,925,2 894,934 900,912 906,903,2 918,912 924,903 930,890 936,903 942,943 948,882 954,873 960,916,2 972,943 978,895 984,903 990,925 996,882 1002,925 1008,890 1014,882 1020,873,2 1032,912 1038,864 1044,882 1050,890,2 1062,864,3 1080,873 1086,882 1092,916 1098,895 1104,882 1110,864 1116,882,2 1128,851 1134,873 1140,882 1146,842 1152,860 1158,842,3 1176,873 1182,864 1188,890 1194,851 1200,860 1206,851,2 1218,873,2 1230,851,2 1242,860 1248,842 1254,834 1260,821,2 1272,851,2 1284,842 1290,864 1296,821,3 1314,842 1320,834 1326,821,2 1338,851 1344,808 1350,829 1356,808 1362,812,3 1380,821 1386,812 1392,834 1398,829 1404,808",
    median:
      "0-57,1335 57-105,1326 105-189,1317 189-321,1308 321-393,1304 393-453,1295 453-513,1287 513-597,1278 597-669,1274 669-705,1265 705-753,1256 753-813,1252 813-921,1243 921-1041,1234 1041-1113,1225 1113-1149,1221 1149-1233,1213 1233-1353,1204 1353-1410,1195",
    average:
      "57-75,1335 105-159,1326 189-237,1317 393-405,1304 453-483,1295 513-561,1287 597-645,1278 669-723,1274 723-807,1265 807-891,1256 891-975,1252 975-1059,1243 1059-1137,1234 1137-1221,1225 1221-1305,1221 1305-1383,1213 1383-1410,1204",
  },
  {
    x: 2070,
    scale: 1568 / 720,
    end: 1398,
    throughput:
      "0,54 6,50 12,50 36,37 48,33 78,33 84,41 90,37 108,37 114,33 120,33 126,37 138,37 144,33 150,33 156,37 162,37 168,33 180,28 186,28 198,33 204,37 210,33 222,28 228,37 234,37 240,33 246,37 258,37 264,33 282,33 288,28 294,28 300,33 306,28 312,33 324,33 330,37 336,37 342,33 372,33 378,28 384,33 402,33 408,28 420,28 432,37 438,37 444,33 468,33 474,28 480,33 492,28 504,28 510,24 516,33 522,28 534,24 540,24 546,37 558,37 564,33 582,33 588,28 594,33 600,28 612,28 618,33 624,33 642,24 648,24 654,19 660,24 666,37 684,37 702,28 720,28 726,33 732,28 756,19 762,28 768,24 780,24 786,33 792,37 810,37 822,33 828,28 858,28 864,24 870,28 876,24 888,24 894,19 900,24 906,28 912,37 930,28 948,28 954,24 960,28 984,28 990,24 1002,19 1014,19 1026,24 1032,33 1056,33 1062,28 1086,28 1092,24 1110,24 1122,19 1128,15 1134,19 1140,19 1146,24 1152,37 1164,33 1170,28 1200,28 1206,24 1230,24 1236,19 1248,19 1254,15 1260,15 1266,28 1272,33 1284,33 1290,28 1308,28 1314,24 1326,24 1332,19 1338,24 1344,19 1356,19 1362,15 1368,15 1374,19 1386,19 1392,28 1398,28",
    data:
      "0,777 6,799 12,812 18,808 24,812 30,842 36,799 42,834 48,842 54,790 60,834,2 72,790 78,821 84,812,2 96,790 102,782 108,799,2 120,790,4 144,777 150,782 156,777 162,790 168,769 174,799,2 186,808 192,782 198,777 204,799 210,777 216,769 222,777 228,760,2 240,751 246,777 252,738,2 264,760 270,751 276,760 282,747 288,782 294,777 300,738,2 312,769 318,760 324,777 330,738 336,725 342,747 348,751,2 360,725 366,769 372,725 378,769,2 390,747 396,751 402,738,4 426,747 432,729,2 444,725 450,760 456,729,2 468,738 474,729 480,738 486,729 492,716 498,747,2 510,708 516,716 522,751 528,708 534,725 540,716 546,694 552,686,3 570,716 576,677 582,668 588,716 594,677 600,708 606,694,3 624,729 630,686 636,694 642,725 648,694 654,725 660,664 666,646 672,633 678,655,3 696,668 702,686 708,668 714,686 720,677 726,668 732,677 738,699,2 750,729 756,677 762,668,2 774,686,2 786,646 792,694 798,625 804,668 810,625 816,633,2 828,612 834,633 840,664 846,668 852,655 858,668 864,655 870,638 876,646 882,668,3 900,655 906,633 912,585 918,625,2 930,655 936,646 942,603 948,612 954,638 960,594 966,616 972,646 978,625,3 996,633 1002,646 1008,655 1014,668 1020,633 1026,646 1032,594 1038,585,3 1056,603,2 1068,612 1074,625 1080,581 1086,616 1092,581 1098,625 1104,612 1110,616 1116,612 1122,616 1128,646 1134,612 1140,616 1146,603 1152,542 1158,555,2 1170,594 1176,551 1182,581 1188,555 1194,612 1200,585 1206,612 1212,564 1218,555 1224,581,2 1236,616,2 1248,572 1254,616 1260,572 1266,555 1272,572 1278,511 1284,551 1290,564 1296,594 1302,551 1308,542 1314,551 1320,585 1326,551,2 1338,585 1344,581,2 1356,572,2 1368,603 1374,585 1380,581 1386,555 1392,520 1398,533",
    median:
      "0-63,1195 63-123,1191 123-231,1182 231-279,1174 279-339,1169 339-435,1160 435-543,1152 543-639,1143 639-687,1139 687-795,1130 795-867,1122 867-915,1112 915-975,1108 975-1059,1100 1059-1167,1091 1167-1275,1086 1275-1395,1078 1395-1398,1070",
    average:
      "0-57,1204 63-141,1195 141-219,1191 231-303,1182 303-381,1174 381-465,1169 465-549,1160 549-627,1152 639-705,1143 705-789,1139 795-867,1130 867-951,1122 951-1029,1112 1029-1107,1108 1107-1191,1100 1191-1269,1091 1275-1353,1086 1395-1398,1078",
  },
];

/* Deviation runs in window pixels: start, end, centre. */
const deviationHead = [
  [668, 669, 1469], [669, 671, 1457], [671, 673, 1453], [673, 699, 1457], [699, 723, 1453], [723, 725, 1457],
  [725, 727, 1453], [727, 771, 1457], [771, 779, 1453], [779, 799, 1457], [799, 881, 1453], [881, 943, 1449],
  [943, 991, 1445], [991, 1043, 1443], [1043, 1091, 1439],
];
const deviationTail = [
  [2157, 2205, 1359], [2205, 2253, 1355], [2253, 2297, 1353], [2297, 2345, 1349], [2345, 2389, 1345],
  [2389, 2437, 1343], [2437, 2483, 1339], [2483, 2531, 1335], [2531, 2536, 1331],
];

const LEFT = 668;
const TOP = 420;
const odd = (v: number) => Math.round((v - 1) / 2) * 2 + 1;
const bar = (x0: number, x1: number, centre: number) => `M${x0 - LEFT} ${centre - TOP - 2}H${x1 - LEFT}v4H${x0 - LEFT}z`;
const numbers = (token: string) => token.split(/[,-]/).map(Number);

const deviationPath = (() => {
  const body: number[][] = [];
  const steps = 22;
  const width = (2157 - 1091) / steps;
  for (let i = 0; i < steps; i++) {
    const x0 = odd(1091 + i * width);
    body.push([x0, odd(1091 + (i + 1) * width), odd(1435 - (i * 73) / (steps - 1))]);
  }
  return [...deviationHead, ...body, ...deviationTail].map(([a, b, c]) => bar(a, b, c)).join("");
})();

const stepPath = (kind: "median" | "average") =>
  strips
    .flatMap((s) =>
      s[kind].split(" ").map((t) => {
        const [a, b, y] = numbers(t);
        return bar(Math.round(s.x + a / 3), Math.round(s.x + b / 3), odd(640 + y / s.scale));
      }),
    )
    .join("");

const dot = (s: Strip, x: number, y: number) => {
  const cx = Math.round(s.x + x / 3);
  return bar(cx - 1, cx + 1, odd(640 + y / s.scale));
};

const dataPath = strips
  .flatMap((s) =>
    s.data.split(" ").flatMap((t) => {
      const [x, y, n = 1] = numbers(t);
      return Array.from({ length: n }, (_, i) => dot(s, x + i * 6, y));
    }),
  )
  .join("");

const throughputPath = strips
  .flatMap((s) => {
    const keys = s.throughput.split(" ").map(numbers);
    const out: string[] = [];
    keys.forEach(([x, y], i) => {
      const next = keys[i + 1];
      const stop = next ? next[0] : x + 1;
      for (let px = x; px < stop && px <= s.end; px += 6) {
        const yy = next ? y + ((next[1] - y) * (px - x)) / (next[0] - x) : y;
        out.push(dot(s, px, yy));
      }
    });
    return out;
  })
  .join("");

const Chart = () => (
  <Plot viewBox="0 0 1868 1058" shapeRendering="crispEdges">
    <path d={dataPath} fill={color.black} />
    <path d={stepPath("average")} fill={color.blue} />
    <path d={stepPath("median")} fill={color.purple} />
    <path d={deviationPath} fill={color.red} />
    <path d={throughputPath} fill={color.green} />
  </Plot>
);

/* ---------- summary ---------- */

const Summary = styled.div`
  display: grid;
  grid-template-columns: 662px 836px auto;
  justify-content: start;
`;

const SummaryCell = styled.div<{ $labels: number }>`
  display: grid;
  grid-template-columns: ${(p) => p.$labels}px auto;
  justify-content: start;
`;

const Stack = styled.div<{ $top: number; $gap: number }>`
  display: flex;
  flex-direction: column;
  gap: ${(p) => p.$gap}px;
  padding-top: ${(p) => p.$top}px;
`;

const summary = [
  { width: 176, rows: [["No of Samples", "2000", color.black], ["Deviation", "86", color.red]] },
  { width: 170, rows: [["Latest Sample", "336", color.black], ["Throughput", "51,457.976/minute", color.green]] },
  { width: 104, rows: [["Average", "177", color.blue], ["Median", "177", color.purple]] },
];

export default function App() {
  return (
    <Window>
      <GlobalStyle />
      <Toolbar>
        {toolbarGroups.map((group, g) => (
          <React.Fragment key={g}>
            {g > 0 && <Separator />}
            {group.map((Item, i) => (
              <Item key={i} />
            ))}
          </React.Fragment>
        ))}
        <Status>
          <Text $width={110} $drop={4}>00:00:02</Text>
          <WarningIcon />
          <Space $size={8} />
          <Text $width={28} $drop={4}>0</Text>
          <Text $width={88} $drop={4} $track={0.5}>0/2000</Text>
          <RemoteIcon />
          <FeatherIcon />
        </Status>
      </Toolbar>
      <Body>
        <TreePane>
          {treeNodes.map((node, i) => (
            <TreeRow key={node.label} $striped={i % 2 === 1} $selected={node.selected}>
              {Array.from({ length: node.depth }, (_, d) => (
                <Indent key={d} $active={d === 2} />
              ))}
              <Expander $open={!!node.open} />
              <node.icon />
              <NodeLabel $drop={4} $track={node.track}>{node.label}</NodeLabel>
            </TreeRow>
          ))}
          <TreeThumb />
        </TreePane>
        <Splitter>
          <Grip />
          <Grip />
          <Grip />
        </Splitter>
        <Panel>
          <Title>Graph Results</Title>
          <FormRow $top={17} $right={4}>
            <Text $width={142} $drop={2}>Name:</Text>
            <Field>Graph Results</Field>
          </FormRow>
          <FormRow $top={18}>
            <Text $width={138} $drop={2} $track={0.15}>Comments:</Text>
            <Field />
          </FormRow>
          <GroupTitle>
            <Rule $width={6} />
            <Text $track={0.04}>Write results to file / Read from file</Text>
            <Rule />
          </GroupTitle>
          <FormRow $top={8} $left={8}>
            <Text $width={110} $drop={2} $track={-0.1}>Filename</Text>
            <Field $width={1100} />
            <Space $size={18} />
            <Button $width={142} $small>Browse...</Button>
            <Space $size={14} />
            <Text $width={212} $drop={2} $track={0.1}>Log/Display Only:</Text>
            <Checkbox label="Errors" width={126} lift />
            <Checkbox label="Successes" width={168} track={-0.2} lift />
            <Button $width={163}>Configure</Button>
          </FormRow>
          <GraphChoices>
            <Text $width={212} $drop={4} $track={-0.05}>Graphs to Display</Text>
            <Checkbox label="Data" width={110} tint={color.black} checked />
            <Checkbox label="Average" width={148} tint={color.blue} track={-0.15} checked />
            <Checkbox label="Median" width={140} tint={color.purple} checked />
            <Checkbox label="Deviation" width={162} tint={color.red} checked />
            <Checkbox label="Throughput" width={170} tint={color.green} track={0.5} checked />
          </GraphChoices>
          <ChartArea>
            <Axis>
              <AxisMark $left={94}>
                <Text $width={62} $color={color.black} $track={0.5}>299</Text>
                <Text>ms</Text>
              </AxisMark>
              <AxisMark $left={102}>
                <Text $width={34} $color={color.black}>0</Text>
                <Text>ms</Text>
              </AxisMark>
            </Axis>
            <PlotColumn>
              <Chart />
              <PlotThumb />
            </PlotColumn>
          </ChartArea>
          <Summary>
            {summary.map((cell) => (
              <SummaryCell key={cell.rows[0][0]} $labels={cell.width}>
                <Stack $top={22} $gap={2}>
                  {cell.rows.map(([label, , tint]) => (
                    <Text key={label} $color={tint} $track={label === "Throughput" ? 0.5 : label === "Average" ? -0.2 : 0}>
                      {label}
                    </Text>
                  ))}
                </Stack>
                <Stack $top={14} $gap={18}>
                  {cell.rows.map(([label, value, tint]) => (
                    <Text key={label} $color={tint} $track={0.45}>{value}</Text>
                  ))}
                </Stack>
              </SummaryCell>
            ))}
          </Summary>
        </Panel>
      </Body>
    </Window>
  );
}
